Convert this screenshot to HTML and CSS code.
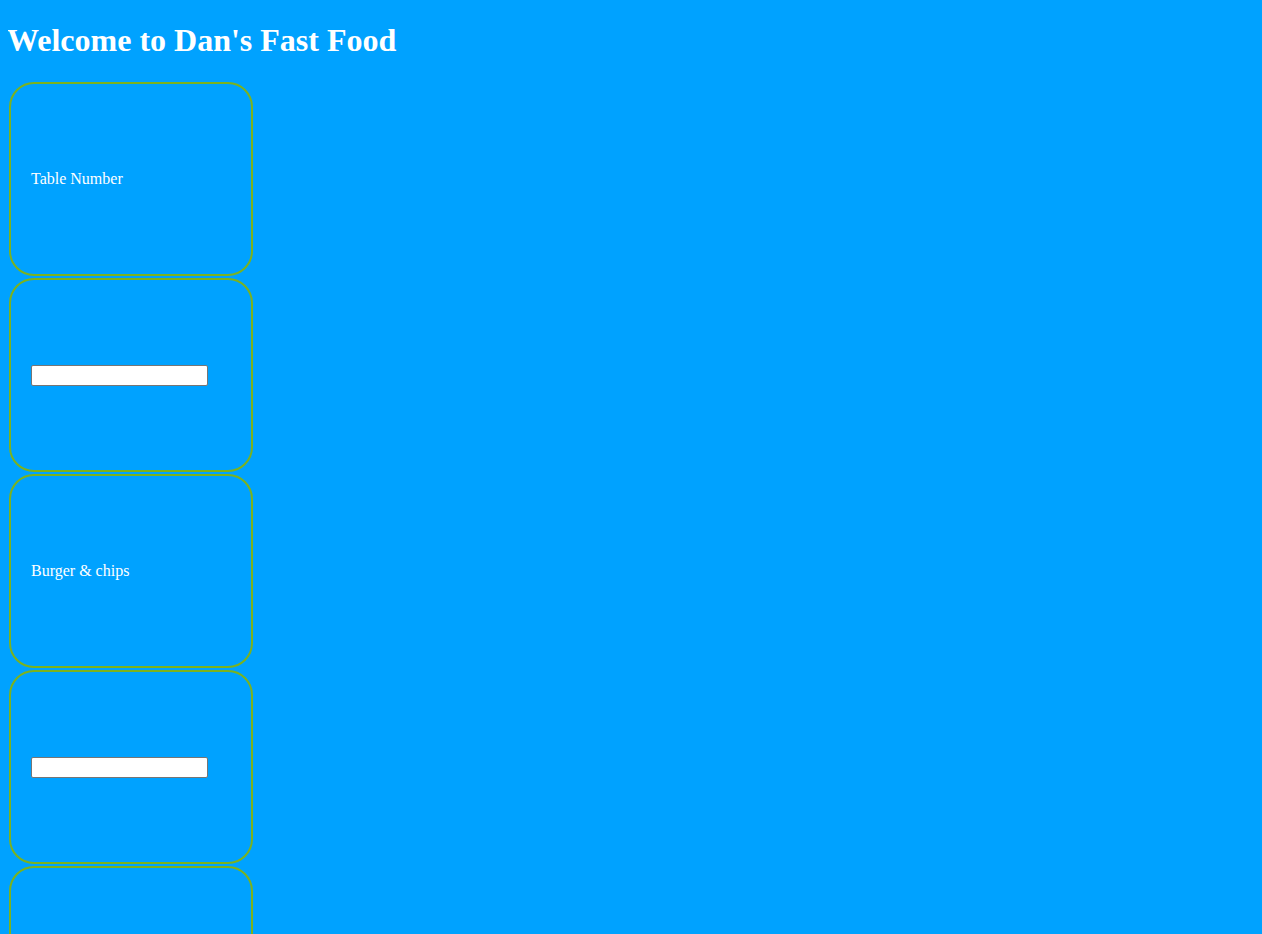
FILE: index.html
```html
<!DOCTYPE html>
<html>
<head>
<meta charset="utf-8">
<title>Dan's Fast Food</title>
<link rel="stylesheet" href="styles.css">
</head>
<body>
<h1 class="title">Welcome to Dan's Fast Food</h1>
<table class="order">
  <tr><td class="cell">Table Number</td></tr>
  <tr><td class="cell"><input class="field" type="text"></td></tr>
  <tr><td class="cell">Burger &amp; chips</td></tr>
  <tr><td class="cell"><input class="field" type="text"></td></tr>
  <tr><td class="cell"></td></tr>
</table>
</body>
</html>
```

FILE: styles.css
```css
html, body {
  background: #00a2ff;
}
body {
  margin: 8px;
  font-family: "Liberation Serif", "Times New Roman", serif;
  color: #ffffff;
}
.title {
  font-size: 32px;
  font-weight: bold;
  margin: 14px 0 21px -1px;
  color: #ffffff;
}
.order {
  border-collapse: separate;
  border-spacing: 1px 2px;
  margin-top: 0;
}
.cell {
  width: 200px;
  height: 150px;
  padding: 20px;
  border: 2px solid #7bb21e;
  border-radius: 25px;
  vertical-align: middle;
  font-size: 16px;
  color: #ffffff;
}
.field {
  display: block;
  box-sizing: border-box;
  width: 177px;
  height: 21px;
  margin: 0;
  padding: 1px 2px;
  border: 1px solid #767676;
  border-radius: 2px;
  background: #ffffff;
  font-family: "Liberation Sans", Arial, sans-serif;
  font-size: 13px;
}
```
